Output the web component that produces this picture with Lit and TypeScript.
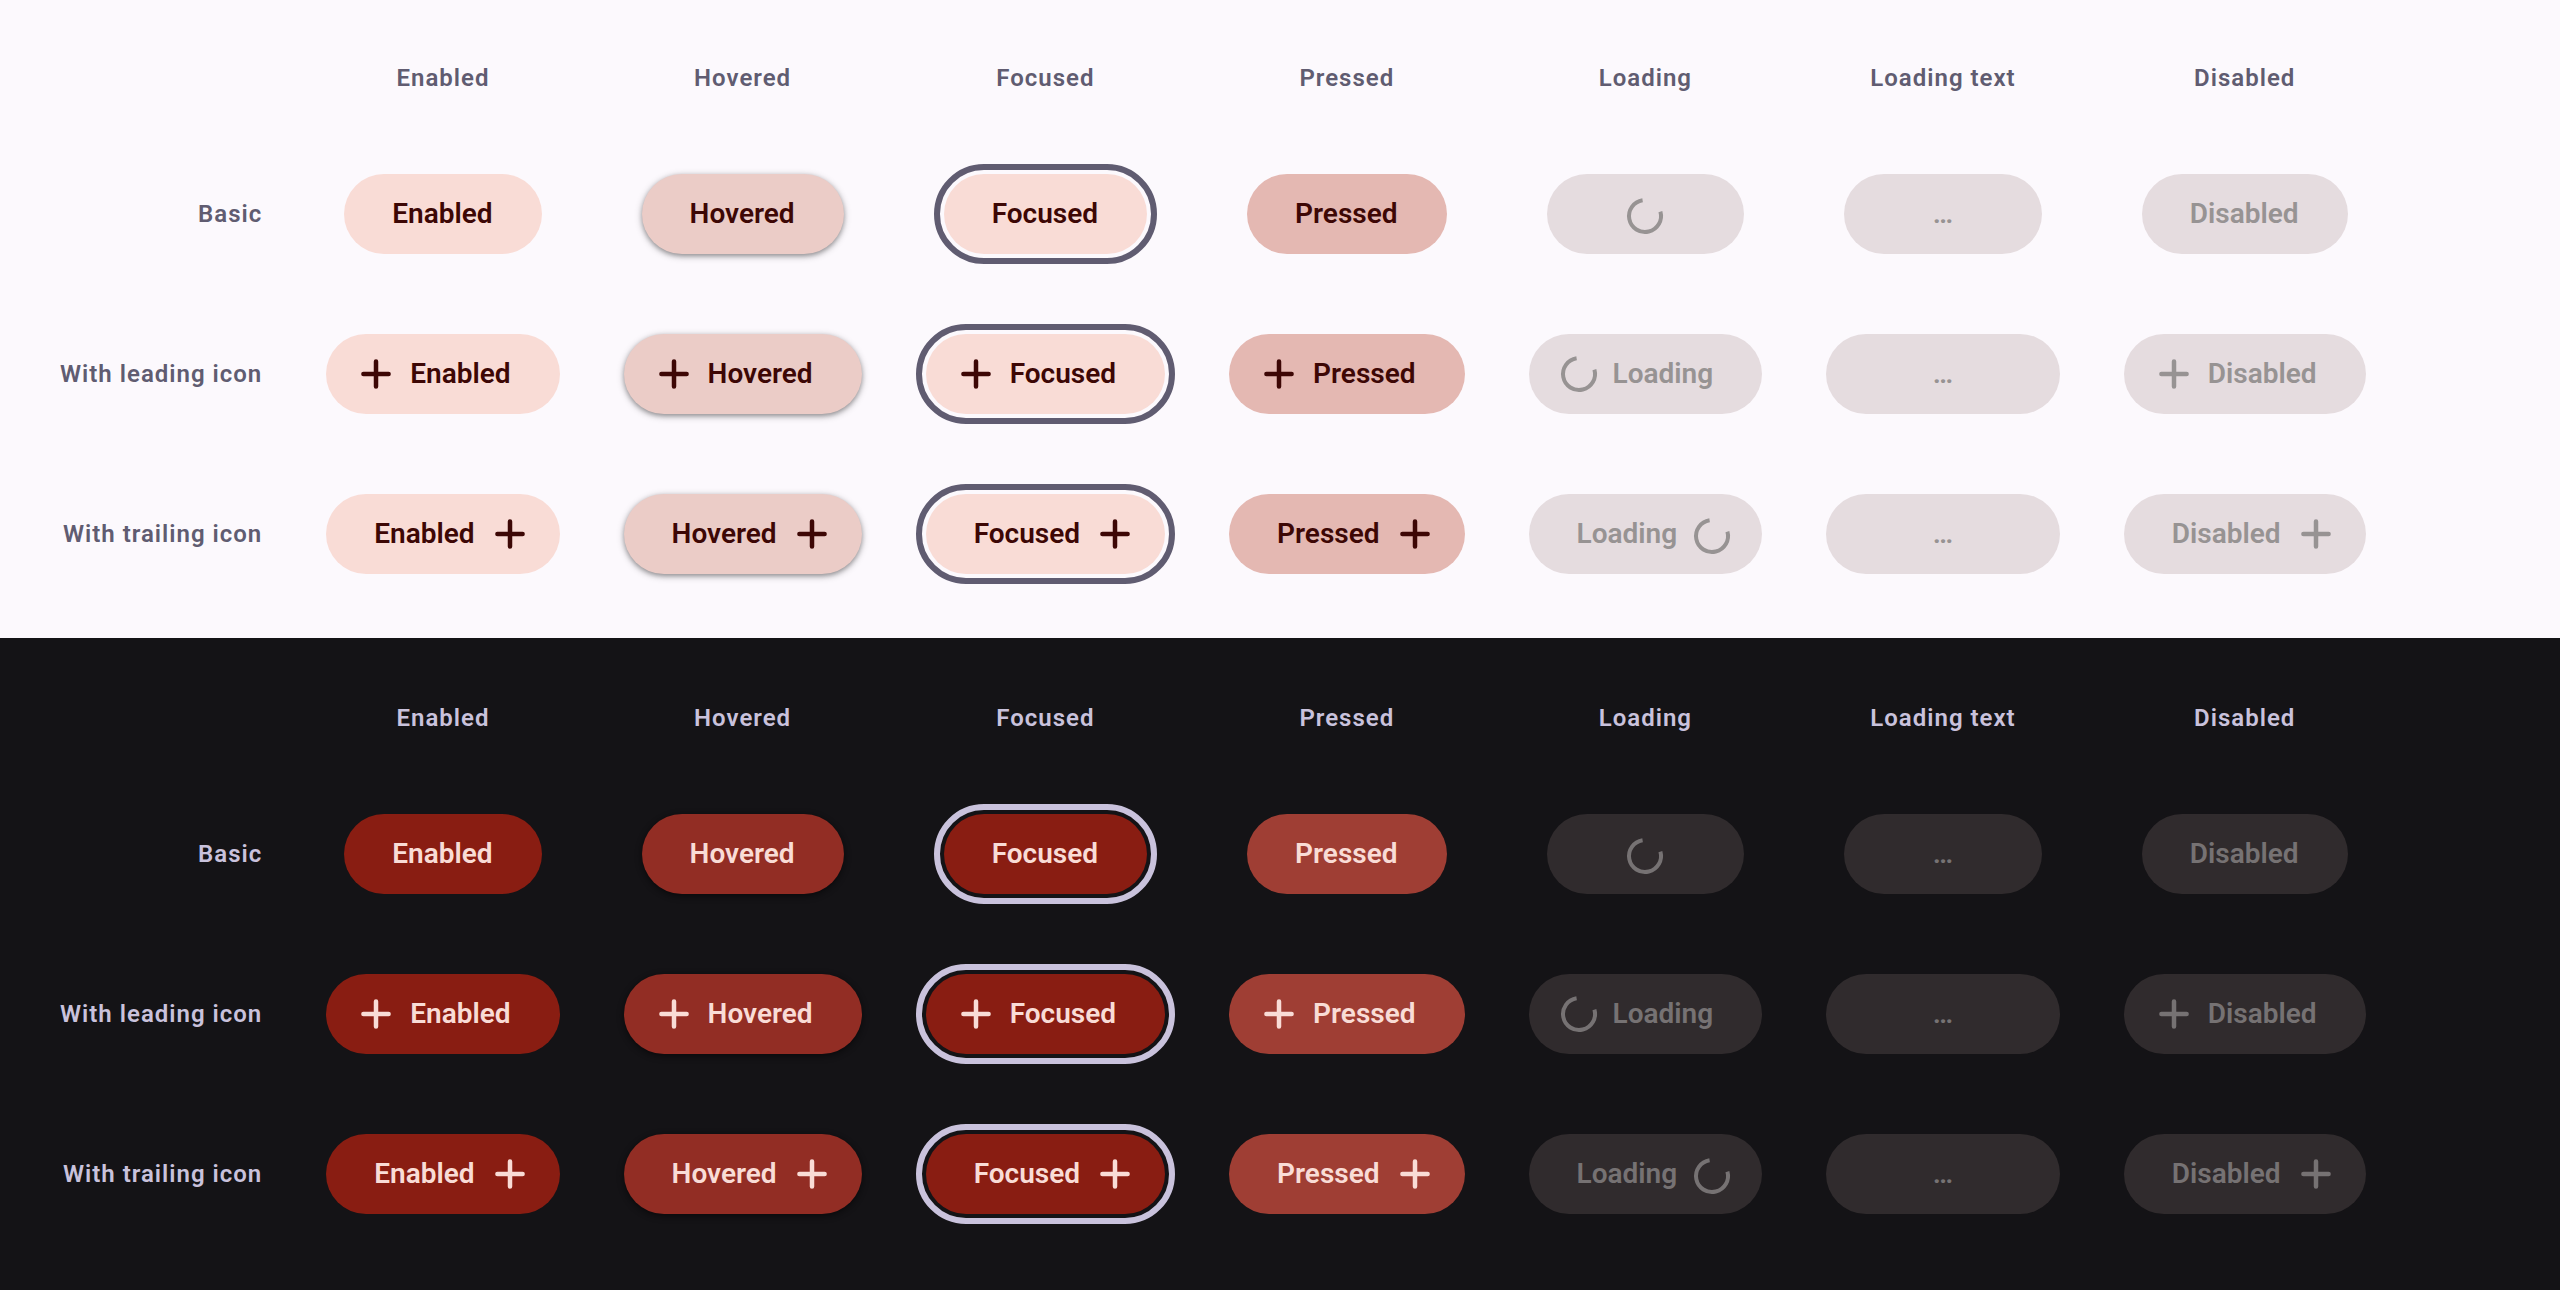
import { LitElement, html, css, svg, nothing } from "lit";
import { customElement, property } from "lit/decorators.js";

type Placement = "basic" | "leading" | "trailing";
type State = "enabled" | "hovered" | "focused" | "pressed" | "loading" | "loading-text" | "disabled";

const STATES: { id: State; label: string }[] = [
  { id: "enabled", label: "Enabled" },
  { id: "hovered", label: "Hovered" },
  { id: "focused", label: "Focused" },
  { id: "pressed", label: "Pressed" },
  { id: "loading", label: "Loading" },
  { id: "loading-text", label: "Loading text" },
  { id: "disabled", label: "Disabled" },
];

const ROWS: { id: Placement; label: string }[] = [
  { id: "basic", label: "Basic" },
  { id: "leading", label: "With leading icon" },
  { id: "trailing", label: "With trailing icon" },
];

const plus = svg`<path d="M18 5.4V30.6M5.4 18H30.6" stroke="currentColor" stroke-width="4.5" stroke-linecap="round" fill="none"/>`;
const arc = svg`<path d="M15.6 2.2A16 16 0 1 0 33.4 13.6" stroke="currentColor" stroke-width="4" fill="none"/>`;

@customElement("tonal-button")
export class TonalButton extends LitElement {
  @property() state: State = "enabled";
  @property() placement: Placement = "basic";
  @property() label = "";

  static styles = css`
    :host {
      display: inline-flex;
      vertical-align: top;
    }
    .button {
      display: inline-grid;
      align-items: center;
      justify-items: center;
      box-sizing: border-box;
      height: 80px;
      margin: 0;
      padding: 0;
      border: 0;
      border-radius: 40px;
      background: var(--container);
      color: var(--on-container);
      font: 600 28px/40px Roboto, sans-serif;
      white-space: nowrap;
    }
    .hovered {
      background: var(--container-hover);
      box-shadow: 0 2px 4px rgba(0, 0, 0, 0.3), 0 2px 6px 2px rgba(0, 0, 0, 0.15);
    }
    .focused {
      outline: 6px solid var(--accent);
      outline-offset: 4px;
    }
    .pressed {
      background: var(--container-pressed);
    }
    .button:disabled {
      background: var(--container-disabled);
      color: var(--on-disabled);
    }
    .content,
    .overlay {
      grid-area: 1 / 1;
      display: inline-flex;
      align-items: center;
      gap: 16px;
    }
    .content {
      padding: 0 48px;
    }
    .leading .content {
      padding-left: 32px;
    }
    .trailing .content {
      padding-right: 32px;
    }
    .content.hidden {
      visibility: hidden;
    }
    .label {
      padding-right: 1px;
    }
    .icon {
      display: block;
      width: 36px;
      height: 36px;
      overflow: visible;
    }
    .basic .spinner,
    .trailing .spinner {
      padding-top: 4px;
    }
  `;

  private icon(loading: boolean) {
    return html`<svg class="icon ${loading ? "spinner" : ""}" viewBox="0 0 36 36" aria-hidden="true">${loading ? arc : plus}</svg>`;
  }

  render() {
    const loading = this.state === "loading";
    const textual = this.state === "loading-text";
    const basic = this.placement === "basic";
    const hidden = textual || (loading && basic);
    const off = loading || textual || this.state === "disabled";
    return html`<button
      class="button ${this.state} ${this.placement}"
      type="button"
      ?disabled=${off}
      aria-label=${hidden ? "Loading" : nothing}
    >
      <span class="content ${hidden ? "hidden" : ""}">
        ${this.placement === "leading" ? this.icon(loading) : nothing}
        <span class="label">${this.label}</span>
        ${this.placement === "trailing" ? this.icon(loading) : nothing}
      </span>
      ${textual ? html`<span class="overlay">…</span>` : nothing}
      ${loading && basic ? html`<span class="overlay">${this.icon(true)}</span>` : nothing}
    </button>`;
  }
}

@customElement("state-table")
export class StateTable extends LitElement {
  static styles = css`
    :host {
      display: block;
    }
    .table {
      border-collapse: collapse;
      font: 600 24px/32px Roboto, sans-serif;
      letter-spacing: 1px;
      color: var(--accent);
    }
    .head,
    .row-label,
    .cell {
      padding: 40px 32px;
      font-weight: 600;
      white-space: nowrap;
      text-align: center;
    }
    .head {
      padding: 62px 32px 40px;
    }
    .row-label {
      text-align: right;
    }
    .cell {
      letter-spacing: 0;
      line-height: 0;
    }
  `;

  render() {
    return html`<table class="table">
      <thead>
        <tr>
          <td></td>
          ${STATES.map((s) => html`<th class="head" scope="col">${s.label}</th>`)}
        </tr>
      </thead>
      <tbody>
        ${ROWS.map(
          (r) => html`<tr>
            <th class="row-label" scope="row">${r.label}</th>
            ${STATES.map(
              (s) => html`<td class="cell">
                <tonal-button
                  .state=${s.id}
                  .placement=${r.id}
                  .label=${s.id === "loading-text" ? "Loading" : s.label}
                ></tonal-button>
              </td>`,
            )}
          </tr>`,
        )}
      </tbody>
    </table>`;
  }
}

@customElement("app-root")
export class AppRoot extends LitElement {
  static styles = css`
    :host {
      display: flex;
      flex-direction: column;
      min-height: 100vh;
    }
    .theme {
      padding: 0 28px 24px;
      background: var(--surface);
    }
    .light {
      --surface: #fcf9fd;
      --accent: #605c71;
      --container: #f9dcd6;
      --container-hover: #ebccc7;
      --container-pressed: #e4b8b2;
      --container-disabled: #e5dcdf;
      --on-container: #3d0705;
      --on-disabled: #979393;
    }
    .dark {
      flex: 1;
      padding-top: 2px;
      --surface: #141316;
      --accent: #c9c2dc;
      --container: #891d12;
      --container-hover: #922d24;
      --container-pressed: #9f3e34;
      --container-disabled: #302b2d;
      --on-container: #f9dcd6;
      --on-disabled: #767273;
    }
  `;

  render() {
    return html`
      <section class="theme light" aria-label="Light theme"><state-table></state-table></section>
      <section class="theme dark" aria-label="Dark theme"><state-table></state-table></section>
    `;
  }
}
